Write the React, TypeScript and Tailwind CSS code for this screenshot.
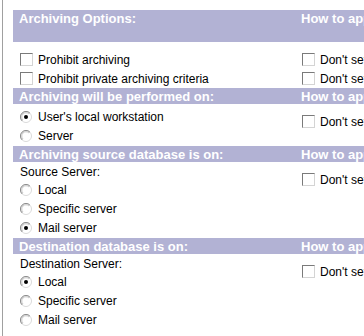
import type { ReactNode } from "react";

function CheckBox() {
  return (
    <span className="block w-[13px] h-[13px] shrink-0 bg-white border border-t-[#7a7a7a] border-l-[#7a7a7a] border-r-[#d4d4d4] border-b-[#d4d4d4]" />
  );
}

function Radio({ checked }: { checked?: boolean }) {
  return (
    <svg width="12" height="12" viewBox="0 0 12 12" className="shrink-0">
      <circle cx="6" cy="6" r="5.5" fill="#ffffff" stroke="#dadada" />
      <path d="M2.1 9.9 A5.5 5.5 0 0 1 9.9 2.1" fill="none" stroke="#8a8a8a" />
      <path d="M3 9 A4.2 4.2 0 0 1 9 3" fill="none" stroke="#c8c8c8" />
      {checked && <circle cx="6" cy="6" r="2" fill="#000000" />}
    </svg>
  );
}

function Row({ children }: { children: ReactNode }) {
  return <div className="flex h-[19px] items-center whitespace-nowrap">{children}</div>;
}

function CheckRow({ label }: { label: string }) {
  return (
    <Row>
      <CheckBox />
      <span className="ml-[5px]">{label}</span>
    </Row>
  );
}

function RadioRow({ label, checked }: { label: string; checked?: boolean }) {
  return (
    <Row>
      <Radio checked={checked} />
      <span className="ml-[6px]">{label}</span>
    </Row>
  );
}

function Header({ title, tall }: { title: string; tall?: boolean }) {
  return (
    <div
      className={`flex ${tall ? "h-[32px]" : "h-[16px]"} bg-[#b2b2d4] pt-[1px] text-[13px] font-bold leading-[15px] text-white whitespace-nowrap`}
    >
      <div className="w-[282px] shrink-0 pl-[6px]">{title}</div>
      <div className="pl-[6px]">How to apply this setting:</div>
    </div>
  );
}

export default function App() {
  return (
    <div
      className="flex h-[336px] w-[364px] overflow-hidden bg-white pl-[2px] text-[12px] text-black"
      style={{ fontFamily: '"Liberation Sans", Arial, sans-serif' }}
    >
      <div className="flex-1 min-w-0 border-l border-[#a0a0a0] pl-[10px] pt-[10px]">
        {/* Archiving options */}
        <Header title="Archiving Options:" tall />
        <div className="flex">
          <div className="w-[282px] shrink-0 pl-[7px] pt-[8px]">
            <CheckRow label="Prohibit archiving" />
            <CheckRow label="Prohibit private archiving criteria" />
          </div>
          <div className="pl-[7px] pt-[8px]">
            <CheckRow label="Don't set in policy" />
            <CheckRow label="Don't set in policy" />
          </div>
        </div>

        {/* Performed on */}
        <Header title="Archiving will be performed on:" />
        <div className="flex">
          <div className="w-[282px] shrink-0 pl-[7px] pt-[3px] pb-[1px]">
            <RadioRow label="User's local workstation" checked />
            <RadioRow label="Server" />
          </div>
          <div className="pl-[7px] pt-[8px]">
            <CheckRow label="Don't set in policy" />
          </div>
        </div>

        {/* Source database */}
        <Header title="Archiving source database is on:" />
        <div className="flex">
          <div className="w-[282px] shrink-0 pl-[7px] pt-[1px] pb-[1px]">
            <div className="flex h-[17px] items-center">Source Server:</div>
            <RadioRow label="Local" />
            <RadioRow label="Specific server" />
            <RadioRow label="Mail server" checked />
          </div>
          <div className="pl-[7px] pt-[8px]">
            <CheckRow label="Don't set in policy" />
          </div>
        </div>

        {/* Destination database */}
        <Header title="Destination database is on:" />
        <div className="flex">
          <div className="w-[282px] shrink-0 pl-[7px] pt-[1px]">
            <div className="flex h-[17px] items-center">Destination Server:</div>
            <RadioRow label="Local" checked />
            <RadioRow label="Specific server" />
            <RadioRow label="Mail server" />
          </div>
          <div className="pl-[7px] pt-[8px]">
            <CheckRow label="Don't set in policy" />
          </div>
        </div>
      </div>
    </div>
  );
}
